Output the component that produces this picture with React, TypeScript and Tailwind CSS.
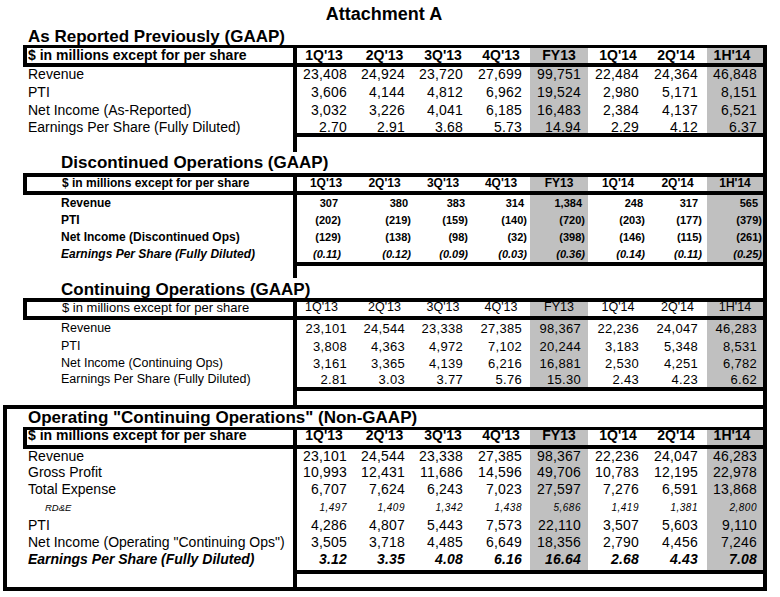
import React from "react";

const GRID = "grid grid-cols-[58px_59px_58px_58px_58px_60px_59px_56px]";
const COLS = ["1Q'13", "2Q'13", "3Q'13", "4Q'13", "FY13", "1Q'14", "2Q'14", "1H'14"];
const GREY = [false, false, false, false, true, false, false, true];
const G = "bg-[#c0c0c0]";

const PAD = ["pr-[8px]", "pr-[9px]", "pr-[9px]", "pr-[8px]", "pr-[7px]", "pr-[9px]", "pr-[9px]", "pr-[6px]"];
const PAD2P = ["pr-[17px]", "pr-[6px]", "pr-[7px]", "pr-[6px]", "pr-[6px]", "pr-[5px]", "pr-[9px]", "pr-[5px]"];
const PAD2N = ["pr-[14px]", "pr-[3px]", "pr-[4px]", "pr-[3px]", "pr-[3px]", "pr-[3px]", "pr-[5px]", "pr-[1px]"];
const HPAD_BOLD = ["pr-[4px]", "", "", "", "", "", "pr-[3px]", "pr-[6px]"];
const HPAD_S2 = ["", "", "", "", "", "", "", ""];
const HPAD_S3 = ["pr-[9px]", "", "", "", "", "", "", ""];

function NumCells({
  vals,
  cls,
  pads,
  padsNeg,
  pt,
}: {
  vals: string[];
  cls: string;
  pads: string[];
  padsNeg?: string[];
  pt: string;
}) {
  return (
    <div className={`${GRID} h-full`}>
      {vals.map((v, i) => (
        <div
          key={i}
          className={`h-full text-right whitespace-nowrap ${pt} ${
            padsNeg && v.startsWith("(") ? padsNeg[i] : pads[i]
          } ${GREY[i] ? G : ""} ${cls}`}
        >
          {v}
        </div>
      ))}
    </div>
  );
}

function HeadCells({ cls, pads, h }: { cls: string; pads: string[]; h: string }) {
  return (
    <div className={`${GRID} ${h}`}>
      {COLS.map((c, i) => (
        <div key={i} className={`h-full text-center whitespace-nowrap ${pads[i]} ${GREY[i] ? G : ""} ${cls}`}>
          {c}
        </div>
      ))}
    </div>
  );
}

type RowDef = {
  h: string;
  label: string;
  labelCls: string;
  vals: string[];
  numCls: string;
  pt: string;
};

function Row({ r, pads, padsNeg }: { r: RowDef; pads: string[]; padsNeg?: string[] }) {
  return (
    <div className={`ml-[23px] flex w-[744px] ${r.h}`}>
      <div className={`w-[270px] shrink-0 whitespace-nowrap ${r.pt} ${r.labelCls}`}>{r.label}</div>
      <div className="w-[474px] shrink-0 h-full border-x-4 border-black">
        <NumCells vals={r.vals} cls={r.numCls} pads={pads} padsNeg={padsNeg} pt={r.pt} />
      </div>
    </div>
  );
}

function Row4({ r }: { r: RowDef }) {
  return (
    <div className={`flex ${r.h}`}>
      <div className={`w-[286px] shrink-0 whitespace-nowrap ${r.pt} ${r.labelCls}`}>{r.label}</div>
      <div className="w-[470px] shrink-0 h-full border-l-4 border-black">
        <NumCells vals={r.vals} cls={r.numCls} pads={PAD} pt={r.pt} />
      </div>
    </div>
  );
}

function BottomLine() {
  return (
    <div className="ml-[23px] flex w-[744px] h-[4px]">
      <div className="w-[270px] shrink-0" />
      <div className="w-[474px] shrink-0 bg-black" />
    </div>
  );
}

function Spacer({ h }: { h: string }) {
  return (
    <div className={`ml-[23px] flex w-[744px] ${h}`}>
      <div className="w-[270px] shrink-0" />
      <div className="w-[474px] shrink-0 border-x-4 border-black" />
    </div>
  );
}

const S1L = "pl-[5px] text-[14px] leading-[14px]";
const S1N = "text-[14px] leading-[14px] tracking-[0.2px]";
const s1: RowDef[] = [
  { h: "h-[17.5px]", label: "Revenue", labelCls: S1L, numCls: S1N, pt: "pt-0", vals: ["23,408", "24,924", "23,720", "27,699", "99,751", "22,484", "24,364", "46,848"] },
  { h: "h-[18px]", label: "PTI", labelCls: S1L, numCls: S1N, pt: "pt-0", vals: ["3,606", "4,144", "4,812", "6,962", "19,524", "2,980", "5,171", "8,151"] },
  { h: "h-[17.5px]", label: "Net Income (As-Reported)", labelCls: S1L, numCls: S1N, pt: "pt-0", vals: ["3,032", "3,226", "4,041", "6,185", "16,483", "2,384", "4,137", "6,521"] },
  { h: "h-[13px]", label: "Earnings Per Share (Fully Diluted)", labelCls: S1L, numCls: S1N, pt: "pt-0", vals: ["2.70", "2.91", "3.68", "5.73", "14.94", "2.29", "4.12", "6.37"] },
];

const S2L = "pl-[38px] text-[12px] leading-[12px] font-bold";
const S2N = "text-[11px] leading-[12px] font-bold";
const s2: RowDef[] = [
  { h: "h-[17px]", label: "Revenue", labelCls: S2L, numCls: S2N, pt: "pt-[2px]", vals: ["307", "380", "383", "314", "1,384", "248", "317", "565"] },
  { h: "h-[17px]", label: "PTI", labelCls: S2L, numCls: S2N, pt: "pt-[2px]", vals: ["(202)", "(219)", "(159)", "(140)", "(720)", "(203)", "(177)", "(379)"] },
  { h: "h-[17px]", label: "Net Income (Discontinued Ops)", labelCls: S2L, numCls: S2N, pt: "pt-[2px]", vals: ["(129)", "(138)", "(98)", "(32)", "(398)", "(146)", "(115)", "(261)"] },
  { h: "h-[16px]", label: "Earnings Per Share (Fully Diluted)", labelCls: `${S2L} italic`, numCls: `${S2N} italic`, pt: "pt-[2px]", vals: ["(0.11)", "(0.12)", "(0.09)", "(0.03)", "(0.36)", "(0.14)", "(0.11)", "(0.25)"] },
];

const S3L = "pl-[38px] text-[12.5px] leading-[13px]";
const S3N = "text-[13px] leading-[13px] tracking-[0.3px]";
const s3: RowDef[] = [
  { h: "h-[17.5px]", label: "Revenue", labelCls: S3L, numCls: S3N, pt: "pt-[2px]", vals: ["23,101", "24,544", "23,338", "27,385", "98,367", "22,236", "24,047", "46,283"] },
  { h: "h-[17.5px]", label: "PTI", labelCls: S3L, numCls: S3N, pt: "pt-[2px]", vals: ["3,808", "4,363", "4,972", "7,102", "20,244", "3,183", "5,348", "8,531"] },
  { h: "h-[17px]", label: "Net Income (Continuing Ops)", labelCls: S3L, numCls: S3N, pt: "pt-[2px]", vals: ["3,161", "3,365", "4,139", "6,216", "16,881", "2,530", "4,251", "6,782"] },
  { h: "h-[15px]", label: "Earnings Per Share (Fully Diluted)", labelCls: S3L, numCls: S3N, pt: "pt-[1px]", vals: ["2.81", "3.03", "3.77", "5.76", "15.30", "2.43", "4.23", "6.62"] },
];

const S4L = "pl-[21px] text-[14px] leading-[14px]";
const S4N = "text-[14px] leading-[14px] tracking-[0.2px]";
const s4: RowDef[] = [
  { h: "h-[16px]", label: "Revenue", labelCls: S4L, numCls: S4N, pt: "pt-0", vals: ["23,101", "24,544", "23,338", "27,385", "98,367", "22,236", "24,047", "46,283"] },
  { h: "h-[17px]", label: "Gross Profit", labelCls: S4L, numCls: S4N, pt: "pt-0", vals: ["10,993", "12,431", "11,686", "14,596", "49,706", "10,783", "12,195", "22,978"] },
  { h: "h-[18px]", label: "Total Expense", labelCls: S4L, numCls: S4N, pt: "pt-0", vals: ["6,707", "7,624", "6,243", "7,023", "27,597", "7,276", "6,591", "13,868"] },
  { h: "h-[18px]", label: "RD&E", labelCls: "pl-[38px] text-[9.5px] leading-[10px] italic", numCls: "text-[10px] leading-[10px] italic tracking-[0.5px]", pt: "pt-[2.5px]", vals: ["1,497", "1,409", "1,342", "1,438", "5,686", "1,419", "1,381", "2,800"] },
  { h: "h-[17px]", label: "PTI", labelCls: S4L, numCls: S4N, pt: "pt-0", vals: ["4,286", "4,807", "5,443", "7,573", "22,110", "3,507", "5,603", "9,110"] },
  { h: "h-[17px]", label: 'Net Income (Operating "Continuing Ops")', labelCls: S4L, numCls: S4N, pt: "pt-0", vals: ["3,505", "3,718", "4,485", "6,649", "18,356", "2,790", "4,456", "7,246"] },
  { h: "h-[18px]", label: "Earnings Per Share (Fully Diluted)", labelCls: `${S4L} font-bold italic`, numCls: `${S4N} font-bold italic`, pt: "pt-0", vals: ["3.12", "3.35", "4.08", "6.16", "16.64", "2.68", "4.43", "7.08"] },
];

export default function App() {
  return (
    <div className="w-[780px] h-[597px] overflow-hidden bg-white text-black font-['Liberation_Sans',Arial,sans-serif]">
      <div className="w-[768px] h-[28px] pt-[5px] text-center text-[18px] leading-[18px] font-bold">Attachment A</div>

      {/* Section 1 */}
      <div className="h-[17px] pl-[28px] text-[17px] leading-[17px] font-bold whitespace-nowrap">
        As Reported Previously (GAAP)
      </div>
      <div className="ml-[23px] flex w-[744px] border-x-4 border-t-[3px] border-b-4 border-black">
        <div className="w-[266px] shrink-0 h-[15px] pl-[1px] text-[14px] leading-[14px] font-bold whitespace-nowrap">
          $ in millions except for per share
        </div>
        <div className="w-[470px] shrink-0 border-l-4 border-black">
          <HeadCells h="h-[15px]" cls="text-[14px] leading-[14px] font-bold" pads={HPAD_BOLD} />
        </div>
      </div>
      {s1.map((r, i) => (
        <Row key={i} r={r} pads={PAD} />
      ))}
      <BottomLine />
      <Spacer h="h-[15px]" />

      {/* Section 2 */}
      <div className="ml-[23px] w-[744px] h-[21px] border-r-4 border-black pl-[38px] pt-[1.5px] text-[17px] leading-[17px] font-bold whitespace-nowrap">
        Discontinued Operations (GAAP)
      </div>
      <div className="ml-[23px] flex w-[744px] border-4 border-black">
        <div className="w-[266px] shrink-0 h-[14px] pl-[35px] text-[12px] leading-[12px] font-bold whitespace-nowrap">
          $ in millions except for per share
        </div>
        <div className="w-[470px] shrink-0 border-l-4 border-black">
          <HeadCells h="h-[14px]" cls="text-[12px] leading-[12px] font-bold" pads={HPAD_S2} />
        </div>
      </div>
      {s2.map((r, i) => (
        <Row key={i} r={r} pads={PAD2P} padsNeg={PAD2N} />
      ))}
      <BottomLine />
      <Spacer h="h-[12px]" />

      {/* Section 3 */}
      <div className="ml-[23px] w-[744px] h-[20px] border-r-4 border-black pl-[38px] pt-[2.5px] text-[17px] leading-[17px] font-bold whitespace-nowrap">
        Continuing Operations (GAAP)
      </div>
      <div className="ml-[23px] flex w-[744px] border-4 border-black">
        <div className="w-[266px] shrink-0 h-[14px] pl-[35px] text-[13px] leading-[11px] whitespace-nowrap">
          $ in millions except for per share
        </div>
        <div className="w-[470px] shrink-0 border-l-4 border-black">
          <HeadCells h="h-[14px]" cls="text-[12.5px] leading-[11px]" pads={HPAD_S3} />
        </div>
      </div>
      {s3.map((r, i) => (
        <Row key={i} r={r} pads={PAD} />
      ))}
      <BottomLine />
      <Spacer h="h-[14px]" />

      {/* Section 4 */}
      <div className="ml-[3px] w-[764px] border-4 border-black">
        <div className="h-[18px] pl-[21px] text-[17px] leading-[17px] font-bold whitespace-nowrap">
          Operating "Continuing Operations" (Non-GAAP)
        </div>
        <div className="ml-[16px] flex w-[740px] border-l-4 border-t-[3px] border-b-4 border-black">
          <div className="w-[266px] shrink-0 h-[15px] pl-[1px] text-[14px] leading-[11px] font-bold whitespace-nowrap">
            $ in millions except for per share
          </div>
          <div className="w-[470px] shrink-0 border-l-4 border-black">
            <HeadCells h="h-[15px]" cls="text-[14px] leading-[11px] font-bold" pads={HPAD_BOLD} />
          </div>
        </div>
        {s4.map((r, i) => (
          <Row4 key={i} r={r} />
        ))}
        <div className="flex h-[4px]">
          <div className="w-[286px] shrink-0" />
          <div className="w-[470px] shrink-0 bg-black" />
        </div>
        <div className="flex h-[13px]">
          <div className="w-[286px] shrink-0" />
          <div className="w-[470px] shrink-0 border-l-4 border-black" />
        </div>
      </div>
    </div>
  );
}
